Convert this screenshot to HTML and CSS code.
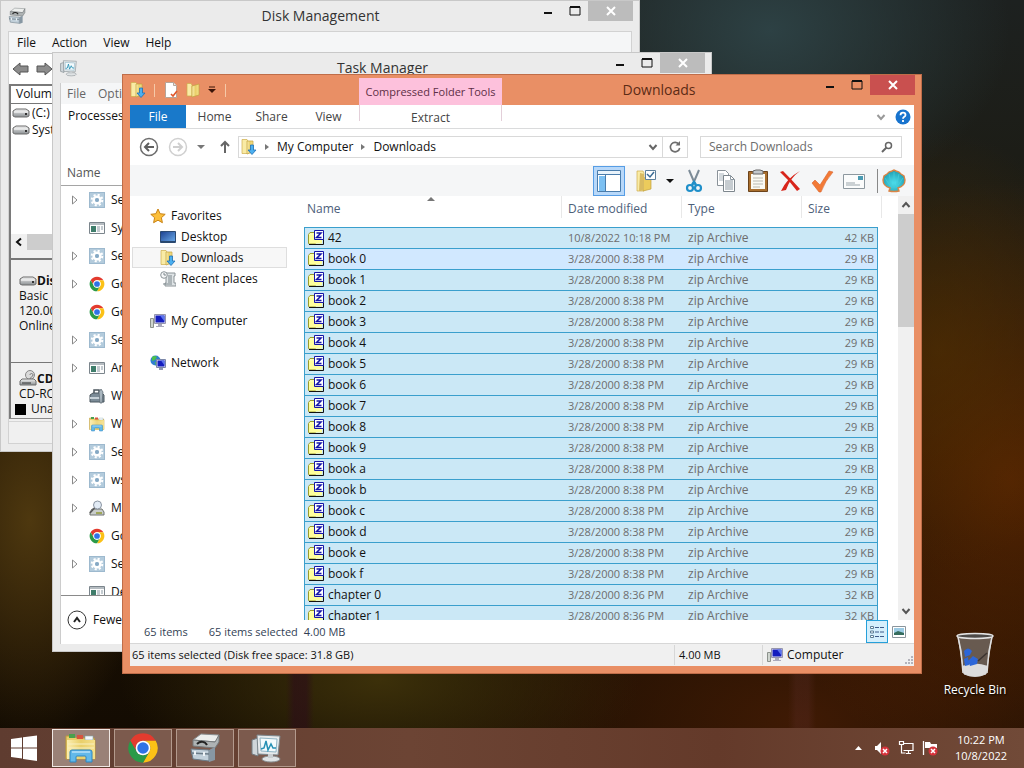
FILE: index.html
```html
<!DOCTYPE html>
<html lang="en">
  <head>
    <meta charset="utf-8" />
    <meta name="viewport" content="width=device-width, initial-scale=1.0" />
    <title>Desktop</title>
    <link rel="stylesheet" href="styles.css" />
  </head>
  <body>
    <svg class="sprite" aria-hidden="true">
      <defs>
        <linearGradient id="g-folder" x1="0" x2="1" y1="0" y2="0">
          <stop offset="0" stop-color="#fbeeb0" />
          <stop offset="0.5" stop-color="#e9cf6a" />
          <stop offset="1" stop-color="#f5df8a" />
        </linearGradient>
        <linearGradient id="g-screen" x1="0" x2="1" y1="0" y2="1">
          <stop offset="0" stop-color="#1b3f8f" />
          <stop offset="1" stop-color="#6fb0ee" />
        </linearGradient>
        <linearGradient id="g-metal" x1="0" x2="0" y1="0" y2="1">
          <stop offset="0" stop-color="#f2f2f2" />
          <stop offset="1" stop-color="#8a8f92" />
        </linearGradient>
        <radialGradient id="g-shell" cx="0.5" cy="0.6" r="0.6">
          <stop offset="0" stop-color="#4fe0ee" />
          <stop offset="1" stop-color="#1d9aae" />
        </radialGradient>
      </defs>

      <symbol id="close" viewBox="0 0 12 12">
        <path d="M2 2l8 8M10 2l-8 8" stroke="currentColor" stroke-width="2" />
      </symbol>
      <symbol id="max" viewBox="0 0 12 12">
        <path d="M1 2h10v8H1z" fill="none" stroke="currentColor" stroke-width="1" />
        <path d="M1 2h10" stroke="currentColor" stroke-width="2" />
      </symbol>
      <symbol id="min" viewBox="0 0 12 12">
        <path d="M2 8h8" stroke="currentColor" stroke-width="2" />
      </symbol>
      <symbol id="chevron" viewBox="0 0 12 12">
        <path d="M2.5 4L6 8l3.500-4" fill="none" stroke="currentColor" stroke-width="2" />
      </symbol>
      <symbol id="caret" viewBox="0 0 8 8">
        <path d="M0 2h8L4 6z" fill="currentColor" />
      </symbol>
      <symbol id="expand" viewBox="0 0 8 10">
        <path d="M1.500 1v8L6 5z" fill="#fff" stroke="#8a8a8a" />
      </symbol>

      <symbol id="chrome" viewBox="0 0 24 24">
        <path d="M2.470 6.500A11 11 0 0 1 21.530 6.500H12A5.500 5.500 0 0 0 7.240 14.750z" fill="#e33b2e" />
        <path d="M21.530 6.500A11 11 0 0 1 12 23L16.760 14.750A5.500 5.500 0 0 0 12 6.500z" fill="#fbc116" />
        <path d="M2.470 6.500A11 11 0 0 0 12 23L16.760 14.750A5.500 5.500 0 0 1 7.240 14.750z" fill="#2a9a48" />
        <circle cx="12" cy="12" r="5.500" fill="#fff" />
        <circle cx="12" cy="12" r="4.300" fill="#2f72e6" />
      </symbol>
      <symbol id="gear" viewBox="0 0 16 16">
        <path d="M0 0h16v16H0z" fill="#9db9ce" />
        <path d="M1 1h14v14H1z" fill="#b3cbdc" />
        <circle cx="8" cy="8" r="5.300" fill="none" stroke="#fff" stroke-width="2" stroke-dasharray="2.100 2.060" />
        <circle cx="8" cy="8" r="3.300" fill="none" stroke="#fff" stroke-width="2.600" />
        <circle cx="8" cy="8" r="2" fill="#86a9c4" />
      </symbol>
      <symbol id="appwin" viewBox="0 0 16 16">
        <path d="M.5 2.500h15v11H.5z" fill="#fdfdfd" stroke="#7b858c" />
        <path d="M1 3h14v2H1z" fill="#b5bcc1" />
        <path d="M2 6h5v6H2z" fill="#3f7d6b" />
        <path d="M8 7h3M8 9h3M8 11h3M12 7h2M12 9h2" stroke="#8b9aa4" />
      </symbol>
      <symbol id="toolbox" viewBox="0 0 16 16">
        <path d="M1 7l3-2h9l2 2v7H1z" fill="#7b8b97" stroke="#4b565e" />
        <path d="M5 5V2h5v3" fill="none" stroke="#4b565e" stroke-width="1.500" />
        <path d="M1 9h11v2H1z" fill="#c6d0d7" />
        <path d="M12 1l2 3-1 11h-2l-1-11z" fill="#a9b6bf" stroke="#59656e" stroke-width=".7" />
      </symbol>
      <symbol id="explorer" viewBox="0 0 32 32">
        <path d="M1 4h8l2 2h18l1 3v18H1z" fill="#e9cd6b" stroke="#bd9a3a" />
        <path d="M4 2h6v4H4z" fill="#49a04d" />
        <path d="M12 3h6v4h-6z" fill="#d8543e" />
        <path d="M20 4h8v4h-8z" fill="#f3f6fa" stroke="#8aa" stroke-width=".6" />
        <path d="M2 8h28v19H2z" fill="url(#g-folder)" />
        <path d="M3 12h26M3 16h26" stroke="#f8efc0" />
        <path d="M5 30V20q0-2 2-2h18q2 0 2 2v10h-6v-5q0-1-1-1h-8q-1 0-1 1v5z" fill="#63b9ea" stroke="#2f86c1" />
        <path d="M7 20h18" stroke="#b9e2f8" stroke-width="1.500" />
      </symbol>
      <symbol id="magnifier-disk" viewBox="0 0 16 16">
        <path d="M1 12l2-3h10l2 3v3H1z" fill="#c9cdcb" stroke="#6e7371" />
        <path d="M7 12h6v2H7z" fill="#9fa75a" />
        <circle cx="8.500" cy="5" r="4" fill="#e2ebf5" stroke="#8b95a2" />
        <path d="M5.500 8L1 13" stroke="#555" stroke-width="1.500" />
      </symbol>
      <symbol id="drive" viewBox="0 0 18 12">
        <path d="M1 4l3-2h10l3 2v5l-2 1H3L1 9z" fill="url(#g-metal)" stroke="#6c6c6c" />
        <path d="M2 5h14" stroke="#fff" />
        <path d="M13 7h2" stroke="#333" stroke-width="2" />
      </symbol>
      <symbol id="cd" viewBox="0 0 18 16">
        <circle cx="11" cy="5" r="4.500" fill="#dadada" stroke="#888" />
        <path d="M11 5c0-2 3-2 3 0s-3 2-3 4" fill="none" stroke="#777" />
        <path d="M1 11l2-2h12l2 2v4H1z" fill="url(#g-metal)" stroke="#6c6c6c" />
        <path d="M3 13h9" stroke="#333" />
      </symbol>
      <symbol id="diskmgr" viewBox="0 0 32 32">
        <path d="M4 8l8-6 18 1-3 7z" fill="#eceeed" stroke="#8b9092" />
        <path d="M4 8l22 2 4-7v7l-4 6-22-2z" fill="#aeb3b4" stroke="#74797b" />
        <path d="M8 12c3-3 8-3 10 1" fill="none" stroke="#222" stroke-width="2" />
        <path d="M2 17l18 1v11L4 27z" fill="#c2d0da" stroke="#6c7c88" />
        <path d="M20 18l6-3v13l-6 2z" fill="#8797a3" />
        <path d="M2 21l18 1" stroke="#6c7c88" stroke-width="1.500" />
        <path d="M6 19v4M15 20v4" stroke="#eef3f6" stroke-width="2" />
      </symbol>
      <symbol id="taskmgr" viewBox="0 0 32 32">
        <path d="M1 8l6-2v18l-6-2z" fill="#cfd6da" stroke="#737c82" />
        <path d="M6 3l23 1-2 19-20-1z" fill="#e6eaec" stroke="#7c878d" />
        <path d="M9 6l17 1-1 13-15-1z" fill="#f4fbfd" stroke="#8fb4c4" />
        <path d="M10 17l3-1 2-7 2 9 3-6 2 4h3" fill="none" stroke="#2590b4" stroke-width="1.500" />
        <ellipse cx="20" cy="27" rx="9" ry="3" fill="#dfe3e5" stroke="#8b9296" />
        <path d="M17 22h5v4h-5z" fill="#c9ced1" />
      </symbol>

      <symbol id="folder" viewBox="0 0 16 16">
        <path d="M2 1.500h4l1 1.500v11H2z" fill="#f9eba5" stroke="#cfae4c" stroke-width=".7" />
        <path d="M7 4l7-2v11l-7 2z" fill="url(#g-folder)" stroke="#c2a03e" stroke-width=".7" />
      </symbol>
      <symbol id="downloads" viewBox="0 0 16 16">
        <path d="M1 .5h5l1 1.500v12.500H1z" fill="#f9eba5" stroke="#cfae4c" stroke-width=".7" />
        <path d="M6 2h6v11l-6 2z" fill="url(#g-folder)" stroke="#c2a03e" stroke-width=".7" />
        <path d="M9.500 6h3v5h2.500l-4 4.500-4-4.500h2.500z" fill="#4bb0f0" stroke="#1d6fb5" stroke-width=".8" />
      </symbol>
      <symbol id="star" viewBox="0 0 16 16">
        <path d="M8 1l2.100 4.700 5.100.6-3.800 3.400 1 5L8 12.200 3.600 14.700l1-5L.8 6.300l5.100-.6z" fill="#fcbf3b" stroke="#c98315" />
      </symbol>
      <symbol id="desktop" viewBox="0 0 16 16">
        <path d="M.5 2.500h15v11H.5z" fill="url(#g-screen)" stroke="#2c4a72" />
        <path d="M1 12h14v1.500H1z" fill="#28486f" />
      </symbol>
      <symbol id="recent" viewBox="0 0 16 16">
        <path d="M4 2h11v3h-1v7h2v3H5v-3h1V6H4z" fill="#dfe4e6" stroke="#8c9498" />
        <circle cx="4" cy="4" r="3.300" fill="#f6f7f8" stroke="#8c9498" />
        <path d="M4 2v2h2M8 5h4M8 7h4M8 9h4M8 11h4M3 13h9" fill="none" stroke="#7d878c" />
      </symbol>
      <symbol id="computer" viewBox="0 0 16 16">
        <path d="M.5 5.500h3v9h-3z" fill="#cfd5cf" stroke="#8c928c" />
        <path d="M4.500 1.500h11v9h-11z" fill="#e9e9f2" stroke="#9595ad" />
        <path d="M5.500 2.500h9v7h-9z" fill="#141dbe" />
        <path d="M10 2.500h4.500v6z" fill="#5b74ec" />
        <path d="M8 11h4v2h2v1H6v-1h2z" fill="#a9a9bb" />
      </symbol>
      <symbol id="network" viewBox="0 0 16 16">
        <circle cx="5.500" cy="5.500" r="5" fill="#2f7fd0" />
        <path d="M2 2q3-2 5 0l-2 3-3 1zM5 7l3 1-2 3z" fill="#4cc04c" />
        <path d="M6.500 4.500h9v8h-9z" fill="#dfe3f4" stroke="#7b87a8" />
        <path d="M7.500 5.500h7v6h-7z" fill="#141dbe" />
        <path d="M11 5.500h3.500v5z" fill="#5b74ec" />
        <path d="M9 13h4v2H9z" fill="#8f97b3" />
      </symbol>
      <symbol id="zip" viewBox="0 0 16 16">
        <path d="M.5 4.500l1.500-2h4l1.500 1.500v9.500h-7z" fill="#ffffb0" stroke="#9a9a2c" />
        <path d="M1 5h13v8.500H1z" fill="#ffff9c" />
        <path d="M1 14.500h14.500V5" fill="none" stroke="#111" />
        <path d="M6.500.500h9v9h-9z" fill="#fff" stroke="#1414a8" />
        <path d="M8.500 3h4.500l-4.500 4.500h5" fill="none" stroke="#1414a8" stroke-width="1.500" />
      </symbol>
    </svg>

    <main class="desktop">
      <!-- Disk Management -->
      <section class="window disk">
        <header class="titlebar">
          <svg class="app-icon"><use href="#diskmgr" /></svg>
          <h1 class="title">Disk Management</h1>
          <div class="win-buttons">
            <button aria-label="Minimize"><svg><use href="#min" /></svg></button>
            <button aria-label="Maximize"><svg><use href="#max" /></svg></button>
            <button class="close" aria-label="Close"><svg><use href="#close" /></svg></button>
          </div>
        </header>
        <div class="client">
          <nav class="menubar">
            <button>File</button>
            <button>Action</button>
            <button>View</button>
            <button>Help</button>
          </nav>
          <div class="disk-tools">
            <button aria-label="Back">
              <svg viewBox="0 0 18 16"><path d="M1 8l7-6v3h8v6H8v3z" fill="#8c8c8c" stroke="#555" /></svg>
            </button>
            <button aria-label="Forward">
              <svg viewBox="0 0 18 16"><path d="M17 8l-7-6v3H2v6h8v3z" fill="#8c8c8c" stroke="#555" /></svg>
            </button>
          </div>
          <div class="disk-view">
            <div class="volumes">
              <div class="volumes-head">Volume</div>
              <div class="volume"><svg><use href="#drive" /></svg>(C:)</div>
              <div class="volume"><svg><use href="#drive" /></svg>System Reserved</div>
            </div>
            <div class="hscroll">
              <button aria-label="Scroll left"><svg><use href="#chevron" /></svg></button>
              <div class="hthumb"></div>
            </div>
            <div class="disk-card">
              <b><svg><use href="#drive" /></svg>Disk 0</b>
              <span>Basic</span>
              <span>120.00 GB</span>
              <span>Online</span>
            </div>
            <div class="disk-card cd-card">
              <b><svg class="cd-icon"><use href="#cd" /></svg>CD-ROM 0</b>
              <span>CD-ROM (D:)</span>
            </div>
            <div class="legend"><i></i>Unallocated</div>
          </div>
          <div class="disk-status"></div>
        </div>
      </section>

      <!-- Task Manager -->
      <section class="window task">
        <header class="titlebar">
          <svg class="app-icon"><use href="#taskmgr" /></svg>
          <h1 class="title">Task Manager</h1>
          <div class="win-buttons">
            <button aria-label="Minimize"><svg><use href="#min" /></svg></button>
            <button aria-label="Maximize"><svg><use href="#max" /></svg></button>
            <button class="close" aria-label="Close"><svg><use href="#close" /></svg></button>
          </div>
        </header>
        <div class="client">
          <nav class="menubar">
            <button>File</button>
            <button>Options</button>
            <button>View</button>
          </nav>
          <div class="task-tabs"><button>Processes</button></div>
          <div class="task-head">Name</div>
          <ul class="processes" id="processes"></ul>
          <footer class="task-foot">
            <button>
              <svg viewBox="0 0 20 20">
                <circle cx="10" cy="10" r="9" fill="none" stroke="#333" />
                <path d="M7 12l3-4 3 4" fill="none" stroke="#222" stroke-width="2" />
              </svg>
              Fewer details
            </button>
          </footer>
        </div>
      </section>

      <!-- Downloads -->
      <section class="window explorer">
        <header class="titlebar">
          <div class="quick">
            <svg class="icon"><use href="#downloads" /></svg>
            <i class="bar"></i>
            <button aria-label="Properties">
              <svg class="icon" viewBox="0 0 16 16">
                <path d="M2.500.5h8l3 3v12h-11z" fill="#fff" stroke="#b5a59a" />
                <path d="M10.500.5v3h3" fill="#e8e8e8" stroke="#b5a59a" />
                <path d="M8 12l2 2 4-5" fill="none" stroke="#e0562a" stroke-width="1.600" />
              </svg>
            </button>
            <button aria-label="New folder"><svg class="icon"><use href="#folder" /></svg></button>
            <button aria-label="Customize" class="customize">
              <svg viewBox="0 0 8 8"><path d="M1 1h6" stroke="#3a1408" /><path d="M0 3h8L4 7z" fill="#3a1408" /></svg>
            </button>
            <i class="bar"></i>
          </div>
          <div class="context-tab">Compressed Folder Tools</div>
          <h1 class="title">Downloads</h1>
          <div class="win-buttons">
            <button aria-label="Minimize"><svg><use href="#min" /></svg></button>
            <button aria-label="Maximize"><svg><use href="#max" /></svg></button>
            <button class="close" aria-label="Close"><svg><use href="#close" /></svg></button>
          </div>
        </header>
        <div class="client">
          <nav class="ribbon">
            <button class="file">File</button>
            <button>Home</button>
            <button>Share</button>
            <button>View</button>
            <button class="extract">Extract</button>
            <div class="ribbon-end">
              <button aria-label="Expand ribbon"><svg class="small"><use href="#chevron" /></svg></button>
              <button aria-label="Help">
                <svg class="help" viewBox="0 0 16 16">
                  <circle cx="8" cy="8" r="7.500" fill="#1773ce" />
                  <path d="M5.500 6.200q0-2.500 2.500-2.500t2.500 2.200q0 1.200-1.500 2-1 .6-1 1.900M8 11v2" fill="none" stroke="#fff" stroke-width="1.800" />
                </svg>
              </button>
            </div>
          </nav>

          <div class="navrow">
            <button aria-label="Back" class="round">
              <svg viewBox="0 0 20 20">
                <circle cx="10" cy="10" r="8.500" fill="none" stroke="#6d6d6d" stroke-width="1.500" />
                <path d="M15 10H6M10 6l-4 4 4 4" fill="none" stroke="#5f5f5f" stroke-width="2" />
              </svg>
            </button>
            <button aria-label="Forward" class="round">
              <svg viewBox="0 0 20 20">
                <circle cx="10" cy="10" r="8.500" fill="none" stroke="#d0d0d0" stroke-width="1.500" />
                <path d="M5 10h9M10 6l4 4-4 4" fill="none" stroke="#cfcfcf" stroke-width="2" />
              </svg>
            </button>
            <button aria-label="Recent locations" class="history"><svg><use href="#caret" /></svg></button>
            <button aria-label="Up" class="up">
              <svg viewBox="0 0 12 14"><path d="M6 13V2M2 6l4-4 4 4" fill="none" stroke="#666" stroke-width="2" /></svg>
            </button>
            <div class="address">
              <svg class="icon"><use href="#downloads" /></svg>
              <i class="crumb"></i>
              <a href="#">My Computer</a>
              <i class="crumb"></i>
              <a href="#">Downloads</a>
              <button aria-label="Previous locations" class="drop"><svg class="small"><use href="#chevron" /></svg></button>
              <button aria-label="Refresh" class="refresh">
                <svg viewBox="0 0 14 14">
                  <path d="M11 4.500A4.700 4.700 0 1 0 11.700 8" fill="none" stroke="#6e6e6e" stroke-width="1.600" />
                  <path d="M7.500 5.500h4.500V1z" fill="#6e6e6e" />
                </svg>
              </button>
            </div>
            <div class="search">
              <input type="text" placeholder="Search Downloads" aria-label="Search Downloads" />
              <svg viewBox="0 0 12 12">
                <circle cx="7.500" cy="4.500" r="3" fill="none" stroke="#666" stroke-width="1.500" />
                <path d="M5.500 6.500L1 11" stroke="#666" stroke-width="2" />
              </svg>
            </div>
          </div>

          <div class="toolbar">
            <button aria-label="Navigation pane" class="pressed">
              <svg viewBox="0 0 24 22">
                <path d="M.5.500h23v21H.5z" fill="#fff" stroke="#4a7cab" />
                <path d="M1 1h22v3H1z" fill="#e9f3fb" />
                <path d="M1 4.500h22" stroke="#4a7cab" />
                <path d="M2 6h6v15H2z" fill="#7cc0f2" />
                <path d="M8.500 5v16" stroke="#4a7cab" />
              </svg>
            </button>
            <button aria-label="Folder options" class="wide">
              <svg viewBox="0 0 24 24">
                <path d="M3 2h6l1 2v18H3z" fill="#f9eba5" stroke="#cfae4c" stroke-width=".7" />
                <path d="M9 9l8-1v12l-8 2z" fill="#eccb5c" stroke="#c2a03e" stroke-width=".7" />
                <path d="M6 4l4 1v15l-3 2H5z" fill="#d9bb62" />
                <path d="M11.500 1.500h10v9h-10z" fill="#fff" stroke="#5d7f9b" />
                <path d="M13 5l3 3 4-5" fill="none" stroke="#3b6c94" stroke-width="1.500" />
              </svg>
              <svg class="arrow"><use href="#caret" /></svg>
            </button>
            <button aria-label="Cut">
              <svg viewBox="0 0 24 24">
                <path d="M7 1l6 14M17 1l-6 14" stroke="#7c8b97" stroke-width="2" />
                <circle cx="8" cy="19" r="3" fill="none" stroke="#1f8fc9" stroke-width="2.200" />
                <circle cx="16" cy="19" r="3" fill="none" stroke="#1f8fc9" stroke-width="2.200" />
                <path d="M10 16l2-3 2 3" fill="none" stroke="#1f8fc9" stroke-width="2.500" />
              </svg>
            </button>
            <button aria-label="Copy">
              <svg viewBox="0 0 24 24">
                <path d="M3.500 1.500h8l3 3v12h-11z" fill="#fff" stroke="#8a9299" />
                <path d="M5 5h5M5 7h7M5 9h7M5 11h7" stroke="#a8b3bb" />
                <path d="M9.500 6.500h7l4 4v12h-11z" fill="#fff" stroke="#7d868d" />
                <path d="M16.500 6.500v4h4M11 12h8M11 14h8M11 16h8M11 18h8M11 20h8" fill="none" stroke="#8d99a2" />
              </svg>
            </button>
            <button aria-label="Paste">
              <svg viewBox="0 0 24 24">
                <path d="M2.500 2.500h19v20h-19z" fill="#a96f2e" stroke="#6c431a" />
                <path d="M5 5h14v15H5z" fill="#fbfaf3" />
                <path d="M7 9h10M7 12h10M7 15h10M7 18h7" stroke="#b9b9b0" />
                <path d="M7 2l3-1h4l3 1v3H7z" fill="#c3c8cb" stroke="#666" />
              </svg>
            </button>
            <button aria-label="Delete">
              <svg viewBox="0 0 24 24">
                <path d="M2 3l3-1q8 8 17 18l-3 2Q11 11 2 3z" fill="#d8251b" />
                <path d="M22 2q-10 7-14 19l-5 1Q9 9 22 2z" fill="#d8251b" />
              </svg>
            </button>
            <button aria-label="Properties">
              <svg viewBox="0 0 24 24">
                <path d="M2 14l3-3 5 5L19 2l4 1q-8 9-12 20H9z" fill="#f27a36" stroke="#d9622a" stroke-width=".6" />
              </svg>
            </button>
            <button aria-label="Email">
              <svg viewBox="0 0 24 24">
                <path d="M1.500 5.500h21v14h-21z" fill="#fbfcfc" stroke="#8d989f" />
                <path d="M16 7h5v4h-5z" fill="#4a9bb3" />
                <path d="M4 14h9M4 16h14" stroke="#9aa5ab" />
              </svg>
            </button>
            <i class="divider"></i>
            <button aria-label="Shell">
              <svg viewBox="0 0 24 24">
                <path d="M7 22l1-3Q1 17 1 11l1-4 3-2 2-2 3-1 2-1 2 1 3 1 2 2 3 2 1 4q0 6-7 8l1 3q-5 1-10 0z" fill="url(#g-shell)" stroke="#d98445" stroke-width="1.400" />
                <path d="M12 19V3M10 19L7 5M14 19l3-14M9 18L3 9M15 18l6-9" stroke="#46cfdc" stroke-width=".7" />
              </svg>
            </button>
          </div>

          <div class="body">
            <nav class="sidebar">
              <a href="#"><svg class="icon"><use href="#star" /></svg>Favorites</a>
              <a href="#" class="sub"><svg class="icon"><use href="#desktop" /></svg>Desktop</a>
              <a href="#" class="sub current"><svg class="icon"><use href="#downloads" /></svg>Downloads</a>
              <a href="#" class="sub"><svg class="icon"><use href="#recent" /></svg>Recent places</a>
              <a href="#" class="group"><svg class="icon"><use href="#computer" /></svg>My Computer</a>
              <a href="#" class="group"><svg class="icon"><use href="#network" /></svg>Network</a>
            </nav>
            <div class="list">
              <table>
                <thead>
                  <tr>
                    <th class="col-name"><span>Name<svg class="sort" viewBox="0 0 8 5"><path d="M4 0l4 4H0z" fill="#777" /></svg></span></th>
                    <th class="col"><span>Date modified</span></th>
                    <th class="col"><span>Type</span></th>
                    <th class="col-size"><span>Size</span></th>
                    <th class="col-end"><span></span></th>
                  </tr>
                </thead>
                <tbody id="files"></tbody>
              </table>
            </div>
            <div class="vscroll">
              <button aria-label="Scroll up" class="flip"><svg class="small"><use href="#chevron" /></svg></button>
              <div class="track"><div class="thumb"></div></div>
              <button aria-label="Scroll down"><svg class="small"><use href="#chevron" /></svg></button>
            </div>
          </div>

          <div class="summary">
            <span>65 items</span>
            <span class="selected">65 items selected</span>
            <span>4.00 MB</span>
            <div class="views">
              <button aria-label="Details view" class="pressed">
                <svg viewBox="0 0 16 14">
                  <path d="M1.500 1.500h3v2h-3zM1.500 6h3v2h-3zM1.500 10.500h3v2h-3z" fill="#fff" stroke="#5f7f96" />
                  <path d="M6 2.500h4M11 2.500h4M6 7h4M11 7h4M6 11.500h4M11 11.500h4" stroke="#3f5b8a" />
                </svg>
              </button>
              <button aria-label="Large icons view">
                <svg viewBox="0 0 14 12">
                  <path d="M.5.500h13v11H.5z" fill="#fff" stroke="#8a959c" />
                  <path d="M2 2h10v7H2z" fill="#9ccbe4" />
                  <path d="M2 7l4-2 6 2v2H2z" fill="#356c5d" />
                </svg>
              </button>
            </div>
          </div>
          <footer class="statusbar">
            <span class="free">65 items selected (Disk free space: 31.8 GB)</span>
            <span class="bytes">4.00 MB</span>
            <span class="zone"><svg class="icon"><use href="#computer" /></svg>Computer</span>
            <svg class="grip" viewBox="0 0 10 10">
              <path d="M7 1h2M4 4h2M7 4h2M1 7h2M4 7h2M7 7h2" stroke="#b3b3bb" stroke-width="2" />
            </svg>
          </footer>
        </div>
      </section>

      <a href="#" class="recycle">
        <svg viewBox="0 0 40 48">
          <path d="M3 4l6 38q11 5 22 0l6-38z" fill="#77706b" fill-opacity=".75" stroke="#c9c9c9" />
          <path d="M7 34l2 8q11 5 22 0l2-8q-13-5-26 0z" fill="#dcdcdc" />
          <path d="M3 5l3 14 2 22M37 5l-3 14-2 22" fill="none" stroke="#dedede" stroke-width="1.500" />
          <path d="M9 19q4-5 8 0l-2 4-5 2zM18 24l5 3-1 5-7 2-2-5zM9 27l4-2 1 8-4 1z" fill="#2c66d8" />
          <path d="M23 29l9-8" stroke="#3c3430" stroke-width="1.500" />
          <ellipse cx="20" cy="4" rx="18" ry="2.500" fill="#4d4a48" stroke="#e4e4e4" stroke-width="1.500" />
        </svg>
        Recycle Bin
      </a>
    </main>

    <footer class="taskbar">
      <button class="start" aria-label="Start">
        <svg viewBox="0 0 26 26">
          <path d="M0 4l11-1.500v10H0zM12 2.300L26 .5v12H12zM0 13.500h11v10L0 22zM12 13.500h14V26l-14-2z" fill="#fff" />
        </svg>
      </button>
      <button class="app active" aria-label="File Explorer"><svg><use href="#explorer" /></svg></button>
      <button class="app" aria-label="Chrome"><svg><use href="#chrome" /></svg></button>
      <button class="app" aria-label="Disk Management"><svg><use href="#diskmgr" /></svg></button>
      <button class="app" aria-label="Task Manager"><svg><use href="#taskmgr" /></svg></button>
      <div class="tray">
        <button aria-label="Show hidden icons"><svg viewBox="0 0 16 16"><path d="M5 10l3.500-4 3.500 4z" fill="#fff" /></svg></button>
        <button aria-label="Volume">
          <svg viewBox="0 0 16 16">
            <path d="M1 6h2l4-4v12l-4-4H1z" fill="#fff" />
            <circle cx="11" cy="11" r="4.500" fill="#d6333b" />
            <path d="M9 9l4 4M13 9l-4 4" stroke="#fff" stroke-width="1.500" />
          </svg>
        </button>
        <button aria-label="Network">
          <svg viewBox="0 0 16 16">
            <path d="M6 3.500h9v7H5.500M8 13.500h5M10.500 11v2" fill="none" stroke="#fff" stroke-width="1.200" />
            <path d="M1.500 1.500h4v3h-4zM3.500 5v8h4" fill="none" stroke="#fff" stroke-width="1.200" />
          </svg>
        </button>
        <button aria-label="Action center">
          <svg viewBox="0 0 16 16">
            <path d="M1.500 1v14" stroke="#fff" stroke-width="1.300" />
            <path d="M3 2h5l1 2h6v4H3z" fill="#fff" />
            <circle cx="11" cy="11" r="4.500" fill="#d6333b" />
            <path d="M9 9l4 4M13 9l-4 4" stroke="#fff" stroke-width="1.500" />
          </svg>
        </button>
      </div>
      <div class="clock"><span>10:22 PM</span><span>10/8/2022</span></div>
    </footer>

    <script src="script.js"></script>
  </body>
</html>
```
FILE: styles.css
```css
* {
  margin: 0;
  padding: 0;
  box-sizing: border-box;
}

body {
  display: flex;
  flex-direction: column;
  height: 100vh;
  overflow: hidden;
  font-family: "Open Sans", "Noto Sans", sans-serif;
  font-size: 12px;
  line-height: 16px;
  color: #111;
  background:
    linear-gradient(90deg, transparent 286px, rgba(45, 12, 25, 0.6) 294px, rgba(45, 12, 25, 0.6) 306px, transparent 314px) 0 640px no-repeat,
    linear-gradient(90deg, transparent 788px, rgba(100, 50, 50, 0.25) 796px, rgba(100, 50, 50, 0.25) 808px, transparent 816px) 0 640px no-repeat,
    radial-gradient(ellipse 240px 180px at 770px 30px, #2d4144, transparent),
    radial-gradient(ellipse 160px 220px at 940px 350px, rgba(85, 50, 0, 0.55), transparent),
    radial-gradient(ellipse 260px 300px at 1010px 480px, rgba(120, 48, 0, 0.6), transparent),
    radial-gradient(ellipse 120px 220px at 30px 520px, #4e380f, transparent),
    radial-gradient(ellipse 260px 120px at 380px 680px, #3c300a, transparent),
    radial-gradient(ellipse 400px 200px at 800px 720px, #3f1a04, transparent),
    linear-gradient(#1d2120, #1c1a10 35%, #1e1204 60%, #120b02);
}

button {
  border: 0;
  background: none;
  font: inherit;
  color: inherit;
}

a {
  color: inherit;
  text-decoration: none;
}

button svg,
.icon {
  display: block;
}

.sprite {
  position: absolute;
  width: 0;
  height: 0;
}

.icon {
  width: 16px;
  height: 16px;
  flex: none;
}

.small {
  width: 12px;
  height: 12px;
}

.desktop {
  position: relative;
  flex: 1;
  min-height: 0;
}

/* windows */

.window {
  position: absolute;
  display: flex;
  flex-direction: column;
  background: #ebebeb;
  border: 1px solid #c8c8c8;
  padding: 0 7px 7px;
}

.titlebar {
  display: flex;
  align-items: center;
  height: 30px;
  flex: none;
  margin-right: -1px;
}

.title {
  flex: 1;
  font-size: 14px;
  font-weight: 400;
  text-align: center;
  color: #333;
}

/* balances the window buttons so the title stays centred */
.app-icon + .title {
  padding-left: 81px;
}

.app-icon {
  width: 18px;
  height: 18px;
}

.win-buttons {
  display: flex;
  align-self: flex-start;
}

.win-buttons button {
  display: flex;
  align-items: center;
  justify-content: center;
  width: 27px;
  height: 20px;
}

.win-buttons svg {
  width: 12px;
  height: 12px;
}

.win-buttons .close {
  width: 45px;
  background: #bcbcbc;
  color: #fff;
}

.client {
  display: flex;
  flex-direction: column;
  flex: 1;
  min-height: 0;
  overflow: hidden;
  background: #fff;
}

.menubar {
  display: flex;
  flex: none;
  height: 21px;
  background: #f5f6f7;
}

.menubar button {
  padding: 0 8px;
}

.disk {
  inset: 0 384px 276px 0;
}

.disk .client {
  border: 1px solid #d2d2d2;
  background: #f0f0f0;
}

.disk-tools {
  display: flex;
  gap: 5px;
  height: 31px;
  padding: 5px 3px;
  background: #fff;
  border-top: 1px solid #c5c5c5;
}

.disk-tools svg {
  width: 18px;
  height: 16px;
}

.disk-view {
  display: flex;
  flex-direction: column;
  height: 335px;
  border-left: 2px solid #7a7a7a;
  border-top: 2px solid #7a7a7a;
  border-bottom: 1px solid #8a8a8a;
}

.volumes {
  flex: 1;
  background: #fff;
}

.volumes-head {
  height: 18px;
  padding-left: 5px;
  border-bottom: 1px solid #777;
}

.volume {
  display: flex;
  align-items: center;
  gap: 2px;
  height: 17px;
  padding-left: 1px;
  white-space: nowrap;
}

.volume svg,
.disk-card svg {
  width: 18px;
  height: 12px;
}

.hscroll {
  display: flex;
  height: 16px;
  background: #f0f0f0;
}

.hscroll button {
  width: 16px;
}

.hscroll svg {
  width: 12px;
  height: 12px;
  margin: auto;
  transform: rotate(90deg);
}

.hthumb {
  flex: 1;
  background: #cdcdcd;
}

.disk-card {
  display: flex;
  flex-direction: column;
  height: 104px;
  margin-top: 8px;
  padding: 13px 8px;
  border-top: 2px solid #777;
  line-height: 15px;
}

.disk-card b {
  display: flex;
  align-items: center;
}

.cd-card {
  height: 38px;
  margin: 0;
  padding-top: 7px;
  border-top-width: 1px;
}

.disk-card .cd-icon {
  height: 16px;
}

.legend {
  display: flex;
  align-items: center;
  gap: 5px;
  height: 18px;
  padding-left: 4px;
}

.legend i {
  width: 11px;
  height: 11px;
  background: #000;
}

.disk-status {
  margin-top: 2px;
  border-top: 1px solid #d5d5d5;
}

.task {
  inset: 52px 312px 76px 52px;
}

.task .menubar {
  color: #666;
}

.task .menubar button {
  padding: 0 6px;
}

.task .client {
  border-left: 1px solid #ccc;
}

.task-tabs {
  padding: 4px 7px 0;
  height: 61px;
}

.task-head {
  height: 21px;
  padding-left: 6px;
  border-bottom: 1px solid #a5a5a5;
  color: #555;
}

.processes {
  flex: 1;
  overflow: hidden;
  list-style: none;
  border-bottom: 1px solid #8a8a8a;
}

.processes li {
  display: flex;
  align-items: center;
  height: 28px;
  padding-left: 10px;
  white-space: nowrap;
}

.expander {
  display: flex;
  width: 18px;
}

.expander svg {
  width: 8px;
  height: 10px;
}

.processes .icon {
  margin-right: 6px;
}

.task-foot {
  padding: 14px 6px;
}

.task-foot button {
  display: flex;
  align-items: center;
  gap: 6px;
  white-space: nowrap;
}

.task-foot svg {
  width: 20px;
  height: 20px;
}

/* explorer window */

.explorer {
  inset: 74px 102px 54px 122px;
  background: #e98f65;
  border-color: #bf6d49;
}

.explorer .title {
  color: #5c2b15;
}

.explorer .win-buttons .close {
  background: #c9504f;
}

.quick {
  display: flex;
  align-items: center;
  gap: 6px;
  width: 229px;
}

.bar {
  width: 1px;
  height: 13px;
  margin: 0 2px;
  background: #f5c9a8;
}

.customize {
  padding: 0 1px;
}

.customize svg {
  width: 8px;
  height: 8px;
}

.context-tab {
  align-self: flex-end;
  width: 143px;
  height: 27px;
  font-size: 11px;
  line-height: 27px;
  text-align: center;
  white-space: nowrap;
  color: #5d2f46;
  background: #fdc1dc;
}

.ribbon {
  display: flex;
  flex: none;
  height: 24px;
  border-bottom: 1px solid #dadbdc;
  color: #444;
}

.ribbon button {
  width: 57px;
}

.ribbon .file {
  width: 56px;
  background: #1979ca;
  color: #fff;
}

.ribbon .extract {
  width: 143px;
  height: 16px;
  margin-left: 2px;
  padding-top: 5px;
  border: solid #e3cfd9;
  border-width: 0 1px;
}

.ribbon-end {
  display: flex;
  align-items: center;
  gap: 8px;
  margin-left: auto;
  padding-right: 3px;
  color: #999;
}

.ribbon .ribbon-end button {
  width: auto;
}

.help {
  width: 16px;
  height: 16px;
}

.navrow {
  display: flex;
  align-items: center;
  flex: none;
  height: 36px;
  padding: 0 12px 0 9px;
}

.round {
  width: 29px;
}

.round svg {
  width: 20px;
  height: 20px;
}

.history {
  width: 18px;
  color: #777;
}

.history svg,
.arrow {
  width: 8px;
  height: 8px;
}

.up {
  width: 23px;
  padding-left: 4px;
}

.up svg {
  width: 12px;
  height: 14px;
}

.address,
.search {
  display: flex;
  align-items: center;
  height: 22px;
  border: 1px solid #d9d9d9;
}

.address {
  flex: 1;
  padding-left: 2px;
}

.crumb {
  margin: 0 8px;
  border: 3px solid transparent;
  border-left: 4px solid #777;
  border-right: 0;
}

.drop {
  margin-left: auto;
  padding: 0 3px;
  color: #666;
}

.refresh {
  width: 25px;
  height: 20px;
  padding: 0 5px;
  border-left: 1px solid #d9d9d9;
}

.refresh svg {
  width: 14px;
  height: 14px;
}

.search {
  width: 202px;
  margin-left: 12px;
  padding: 0 8px;
}

.search input {
  flex: 1;
  min-width: 0;
  border: 0;
  outline: 0;
  font: inherit;
  background: none;
}

.search input::placeholder {
  color: #6d6d6d;
}

.search svg {
  width: 12px;
  height: 12px;
}

.toolbar {
  display: flex;
  align-items: center;
  justify-content: flex-end;
  flex: none;
  height: 31px;
  padding-right: 4px;
  background: #f5f6f7;
}

.toolbar button {
  display: flex;
  align-items: center;
  justify-content: center;
  width: 32px;
  height: 30px;
}

.toolbar svg {
  width: 24px;
  height: 24px;
}

.toolbar .pressed {
  margin-right: 5px;
  border: 1px solid #569de5;
  background: #b8d8f9;
}

.toolbar .wide {
  gap: 8px;
  width: 48px;
}

.toolbar .arrow {
  width: 8px;
  height: 8px;
}

.divider {
  width: 1px;
  height: 24px;
  margin-left: 7px;
  background: #888;
}

.body {
  display: flex;
  flex: 1;
  min-height: 0;
}

.sidebar {
  display: flex;
  flex-direction: column;
  width: 157px;
  margin-right: 17px;
  padding: 9px 0 0 2px;
}

.sidebar a {
  display: flex;
  align-items: center;
  gap: 5px;
  height: 21px;
  padding-left: 17px;
  border: 1px solid transparent;
}

.sidebar .sub {
  padding-left: 27px;
}

.sidebar .current {
  border-color: #dedede;
  background: #f7f7f7;
}

.sidebar .group {
  margin-top: 21px;
}

.list {
  flex: 1;
  overflow: hidden;
}

table {
  width: 100%;
  table-layout: fixed;
  border-spacing: 0;
}

.col {
  width: 120px;
}

.col-size {
  width: 76px;
}

.col-end {
  width: 4px;
}

th {
  height: 31px;
  vertical-align: top;
  text-align: left;
  font-weight: 400;
  color: #4c607a;
}

th span {
  display: block;
  position: relative;
  height: 22px;
  padding: 5px 0 0 6px;
  border-right: 1px solid #e8e8e8;
}

.col-name span {
  padding-left: 3px;
}

.col-size span {
  border: 0;
}

.col-end span {
  padding: 0;
}

.sort {
  position: absolute;
  top: 1px;
  left: 48%;
  width: 8px;
  height: 5px;
}

td {
  height: 21px;
  padding: 0 6px;
  border-top: 1px solid #3a9fcd;
  background: #cbe8f6;
  color: #6d6d6d;
  white-space: nowrap;
}

td:first-child {
  padding-left: 3px;
  border-left: 1px solid #3a9fcd;
  color: #111;
}

td:nth-child(2),
td:nth-child(4) {
  font-size: 11px;
}

td:nth-child(4) {
  padding-right: 3px;
  border-right: 1px solid #3a9fcd;
  text-align: right;
}

tr:nth-child(2) td {
  background: #d1e8ff;
}

.name {
  display: flex;
  align-items: center;
  gap: 4px;
}

.vscroll {
  display: flex;
  flex-direction: column;
  width: 16px;
  margin-left: 16px;
  background: #f0f0f0;
}

.vscroll button {
  height: 18px;
  padding: 0 2px;
  color: #555;
}

.flip svg {
  transform: rotate(180deg);
}

.track {
  flex: 1;
}

.thumb {
  height: 29%;
  background: #cdcdcd;
}

.summary {
  display: flex;
  align-items: center;
  flex: none;
  height: 23px;
  padding-left: 14px;
  font-size: 11px;
  color: #333f55;
}

.selected {
  margin: 0 6px 0 21px;
}

.views {
  display: flex;
  align-items: center;
  margin-left: auto;
  padding-right: 4px;
}

.views button {
  width: 22px;
  height: 23px;
  padding: 0 4px;
}

.views .pressed {
  padding: 0 2px;
  border: 1px solid #26a0da;
  background: #d5effc;
}

.views svg {
  width: 14px;
  height: 12px;
}

.views .pressed svg {
  width: 16px;
  height: 14px;
}

.statusbar {
  display: flex;
  align-items: center;
  flex: none;
  height: 23px;
  font-size: 11px;
  border-top: 1px solid #d7d7d7;
  background: #f0f0f0;
}

.free {
  flex: 1;
  padding-left: 2px;
}

.bytes,
.zone {
  display: flex;
  align-items: center;
  gap: 4px;
  height: 20px;
  padding-left: 4px;
  border-left: 1px solid #d7d7d7;
}

.bytes {
  width: 88px;
}

.zone {
  width: 142px;
  font-size: 12px;
}

.grip {
  align-self: flex-end;
  width: 10px;
  height: 10px;
}

.recycle {
  position: absolute;
  right: 8px;
  bottom: 30px;
  display: flex;
  flex-direction: column;
  align-items: center;
  gap: 2px;
  width: 82px;
  white-space: nowrap;
  color: #fff;
  text-shadow: 1px 1px 2px #000;
}

.recycle svg {
  width: 40px;
  height: 48px;
}

/* taskbar */

.taskbar {
  display: flex;
  align-items: center;
  flex: none;
  height: 40px;
  background: linear-gradient(90deg, #5f3c30, #6c4434 40%, #643a2a 70%, #714a38);
  color: #fff;
}

.start {
  width: 52px;
  padding: 0 11px;
}

.start svg {
  width: 26px;
  height: 26px;
}

.app {
  display: flex;
  align-items: center;
  justify-content: center;
  width: 58px;
  height: 38px;
  margin-right: 4px;
  border: 1px solid #b39a8d;
  background: #7c5a4d;
}

.app.active {
  border-color: #f0e8e4;
  background: #9a8177;
}

.app svg {
  width: 32px;
  height: 32px;
}

.tray {
  display: flex;
  gap: 8px;
  margin-left: auto;
}

.tray svg {
  width: 16px;
  height: 16px;
}

.clock {
  display: flex;
  flex-direction: column;
  align-items: center;
  width: 86px;
  font-size: 11px;
}
```
FILE: script.js
```javascript
const files = [["42", "10/8/2022 10:18 PM", "42 KB"]];

for (const n of "0123456789abcdef") {
  files.push([`book ${n}`, "3/28/2000 8:38 PM", "29 KB"]);
}
for (const n of "01") {
  files.push([`chapter ${n}`, "3/28/2000 8:36 PM", "32 KB"]);
}

document.getElementById("files").innerHTML = files
  .map(
    ([name, date, size]) => `<tr>
      <td><div class="name"><svg class="icon"><use href="#zip" /></svg>${name}</div></td>
      <td>${date}</td>
      <td>zip Archive</td>
      <td>${size}</td>
    </tr>`
  )
  .join("");

// name, icon, has children
const processes = [
  ["Service Host", "gear", true],
  ["System", "appwin", false],
  ["Service Host", "gear", true],
  ["Google Chrome", "chrome", true],
  ["Google Chrome", "chrome", false],
  ["Service Host", "gear", true],
  ["Antimalware", "appwin", true],
  ["Windows Tools", "toolbox", false],
  ["Windows Explorer", "explorer", true],
  ["Service Host", "gear", true],
  ["wsappx", "gear", true],
  ["Microsoft Indexer", "magnifier-disk", true],
  ["Google Chrome", "chrome", false],
  ["Service Host", "gear", true],
  ["Device Host", "appwin", false],
];

document.getElementById("processes").innerHTML = processes
  .map(
    ([name, icon, parent]) => `<li>
      <span class="expander">${
        parent ? '<svg><use href="#expand" /></svg>' : ""
      }</span>
      <svg class="icon"><use href="#${icon}" /></svg>${name}
    </li>`
  )
  .join("");
```
